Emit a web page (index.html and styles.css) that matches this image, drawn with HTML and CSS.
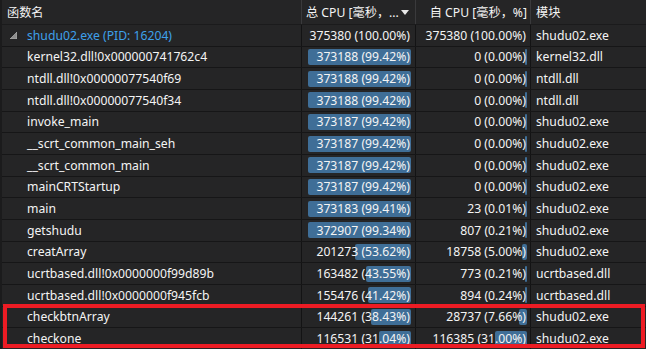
FILE: index.html
```html
<!DOCTYPE html>
<html lang="zh-CN">
<head>
    <meta charset="UTF-8">
    <title>CPU 使用率 - 调用树</title>
    <link rel="stylesheet" href="styles.css">
</head>
<body>
    <div class="tree">
        <div class="row head">
            <div class="cell name">函数名</div>
            <div class="cell total">
                <span>总 CPU [毫秒，...</span>
                <svg class="sort" width="8" height="5" viewBox="0 0 8 5"><polygon points="0,0 8,0 4,5" fill="#e8e8e8"/></svg>
            </div>
            <div class="cell self">自 CPU [毫秒，%]</div>
            <div class="cell module">模块</div>
        </div>

        <div class="row root">
            <div class="cell name">
                <svg class="expander" width="7" height="7" viewBox="0 0 7 7"><polygon points="7,0 7,7 0,7" fill="#8c8c8c" stroke="#bdbdbd" stroke-width="0.6"/></svg>
                <span class="proc">shudu02.exe (PID: 16204)</span>
            </div>
            <div class="cell total"><div class="track"><span class="val">375380 (100.00%)</span></div></div>
            <div class="cell self"><div class="track"><span class="val">375380 (100.00%)</span></div></div>
            <div class="cell module">shudu02.exe</div>
        </div>

        <div class="row">
            <div class="cell name">kernel32.dll!0x000000741762c4</div>
            <div class="cell total"><div class="track"><div class="bar" style="width: 99.42%"></div><span class="val">373188 (99.42%)</span></div></div>
            <div class="cell self"><div class="track"><div class="bar" style="width: 0%"></div><span class="val">0 (0.00%)</span></div></div>
            <div class="cell module">kernel32.dll</div>
        </div>
        <div class="row">
            <div class="cell name">ntdll.dll!0x00000077540f69</div>
            <div class="cell total"><div class="track"><div class="bar" style="width: 99.42%"></div><span class="val">373188 (99.42%)</span></div></div>
            <div class="cell self"><div class="track"><div class="bar" style="width: 0%"></div><span class="val">0 (0.00%)</span></div></div>
            <div class="cell module">ntdll.dll</div>
        </div>
        <div class="row">
            <div class="cell name">ntdll.dll!0x00000077540f34</div>
            <div class="cell total"><div class="track"><div class="bar" style="width: 99.42%"></div><span class="val">373188 (99.42%)</span></div></div>
            <div class="cell self"><div class="track"><div class="bar" style="width: 0%"></div><span class="val">0 (0.00%)</span></div></div>
            <div class="cell module">ntdll.dll</div>
        </div>
        <div class="row">
            <div class="cell name">invoke_main</div>
            <div class="cell total"><div class="track"><div class="bar" style="width: 99.42%"></div><span class="val">373187 (99.42%)</span></div></div>
            <div class="cell self"><div class="track"><div class="bar" style="width: 0%"></div><span class="val">0 (0.00%)</span></div></div>
            <div class="cell module">shudu02.exe</div>
        </div>
        <div class="row">
            <div class="cell name">__scrt_common_main_seh</div>
            <div class="cell total"><div class="track"><div class="bar" style="width: 99.42%"></div><span class="val">373187 (99.42%)</span></div></div>
            <div class="cell self"><div class="track"><div class="bar" style="width: 0%"></div><span class="val">0 (0.00%)</span></div></div>
            <div class="cell module">shudu02.exe</div>
        </div>
        <div class="row">
            <div class="cell name">__scrt_common_main</div>
            <div class="cell total"><div class="track"><div class="bar" style="width: 99.42%"></div><span class="val">373187 (99.42%)</span></div></div>
            <div class="cell self"><div class="track"><div class="bar" style="width: 0%"></div><span class="val">0 (0.00%)</span></div></div>
            <div class="cell module">shudu02.exe</div>
        </div>
        <div class="row">
            <div class="cell name">mainCRTStartup</div>
            <div class="cell total"><div class="track"><div class="bar" style="width: 99.42%"></div><span class="val">373187 (99.42%)</span></div></div>
            <div class="cell self"><div class="track"><div class="bar" style="width: 0%"></div><span class="val">0 (0.00%)</span></div></div>
            <div class="cell module">shudu02.exe</div>
        </div>
        <div class="row">
            <div class="cell name">main</div>
            <div class="cell total"><div class="track"><div class="bar" style="width: 99.41%"></div><span class="val">373183 (99.41%)</span></div></div>
            <div class="cell self"><div class="track"><div class="bar" style="width: 0.01%"></div><span class="val">23 (0.01%)</span></div></div>
            <div class="cell module">shudu02.exe</div>
        </div>
        <div class="row">
            <div class="cell name">getshudu</div>
            <div class="cell total"><div class="track"><div class="bar" style="width: 99.34%"></div><span class="val">372907 (99.34%)</span></div></div>
            <div class="cell self"><div class="track"><div class="bar" style="width: 0.21%"></div><span class="val">807 (0.21%)</span></div></div>
            <div class="cell module">shudu02.exe</div>
        </div>
        <div class="row">
            <div class="cell name">creatArray</div>
            <div class="cell total"><div class="track"><div class="bar" style="width: 53.62%"></div><span class="val">201273 (53.62%)</span></div></div>
            <div class="cell self"><div class="track"><div class="bar" style="width: 5%"></div><span class="val">18758 (5.00%)</span></div></div>
            <div class="cell module">shudu02.exe</div>
        </div>
        <div class="row">
            <div class="cell name">ucrtbased.dll!0x0000000f99d89b</div>
            <div class="cell total"><div class="track"><div class="bar" style="width: 43.55%"></div><span class="val">163482 (43.55%)</span></div></div>
            <div class="cell self"><div class="track"><div class="bar" style="width: 0.21%"></div><span class="val">773 (0.21%)</span></div></div>
            <div class="cell module">ucrtbased.dll</div>
        </div>
        <div class="row">
            <div class="cell name">ucrtbased.dll!0x0000000f945fcb</div>
            <div class="cell total"><div class="track"><div class="bar" style="width: 41.42%"></div><span class="val">155476 (41.42%)</span></div></div>
            <div class="cell self"><div class="track"><div class="bar" style="width: 0.24%"></div><span class="val">894 (0.24%)</span></div></div>
            <div class="cell module">ucrtbased.dll</div>
        </div>
        <div class="row">
            <div class="cell name">checkbtnArray</div>
            <div class="cell total"><div class="track"><div class="bar" style="width: 38.43%"></div><span class="val">144261 (38.43%)</span></div></div>
            <div class="cell self"><div class="track"><div class="bar" style="width: 7.66%"></div><span class="val">28737 (7.66%)</span></div></div>
            <div class="cell module">shudu02.exe</div>
        </div>
        <div class="row">
            <div class="cell name">checkone</div>
            <div class="cell total"><div class="track"><div class="bar" style="width: 31.04%"></div><span class="val">116531 (31.04%)</span></div></div>
            <div class="cell self"><div class="track"><div class="bar" style="width: 31%"></div><span class="val">116385 (31.00%)</span></div></div>
            <div class="cell module">shudu02.exe</div>
        </div>

        <div class="highlight"></div>
    </div>
</body>
</html>
```

FILE: styles.css
```css
* {
    margin: 0;
    padding: 0;
    box-sizing: border-box;
}

body {
    background: #252526;
    font-family: "Noto Sans", "Noto Sans CJK SC", sans-serif;
    font-size: 12.2px;
    color: #f4f4f4;
    overflow: hidden;
}

.tree {
    position: relative;
    width: 646px;
    border-left: 2px solid #1b1b1c;
}

.row {
    display: flex;
    height: 21.67px;
    border-bottom: 1px solid #161617;
    background: #252526;
}

.row.head {
    height: 25px;
    border-bottom: 1px solid #1b1b1c;
}

.cell {
    display: flex;
    align-items: center;
    white-space: nowrap;
    overflow: hidden;
    border-right: 1px solid #131314;
}

.head .cell {
    border-right-color: #3a3a3c;
}

.name {
    width: 300px;
    padding-left: 25px;
}

.head .name {
    padding-left: 5px;
}

.total {
    width: 114px;
    padding: 0 4px 0 5px;
}

.head .total {
    padding-left: 4px;
    justify-content: space-between;
}

.sort {
    margin-right: 2px;
}

.self {
    width: 115px;
    padding: 0 3px 0 7px;
    justify-content: flex-end;
}

.module {
    flex: 1;
    padding-left: 5px;
    border-right: none;
}

.root .name {
    padding-left: 8px;
}

.expander {
    margin-right: 10px;
    margin-top: 1px;
}

.proc {
    color: #3ea0ea;
}

.track {
    position: relative;
    width: 100%;
    height: 16px;
    display: flex;
    align-items: center;
    justify-content: flex-end;
}

.bar {
    position: absolute;
    right: 0;
    top: 0;
    bottom: 0;
    min-width: 2px;
    background: #3f6e97;
    border-radius: 2px;
}

.val {
    position: relative;
    padding-right: 1px;
}

.highlight {
    position: absolute;
    left: 1px;
    top: 304px;
    width: 642px;
    height: 44px;
    border: 4px solid #ed1c24;
}
```
